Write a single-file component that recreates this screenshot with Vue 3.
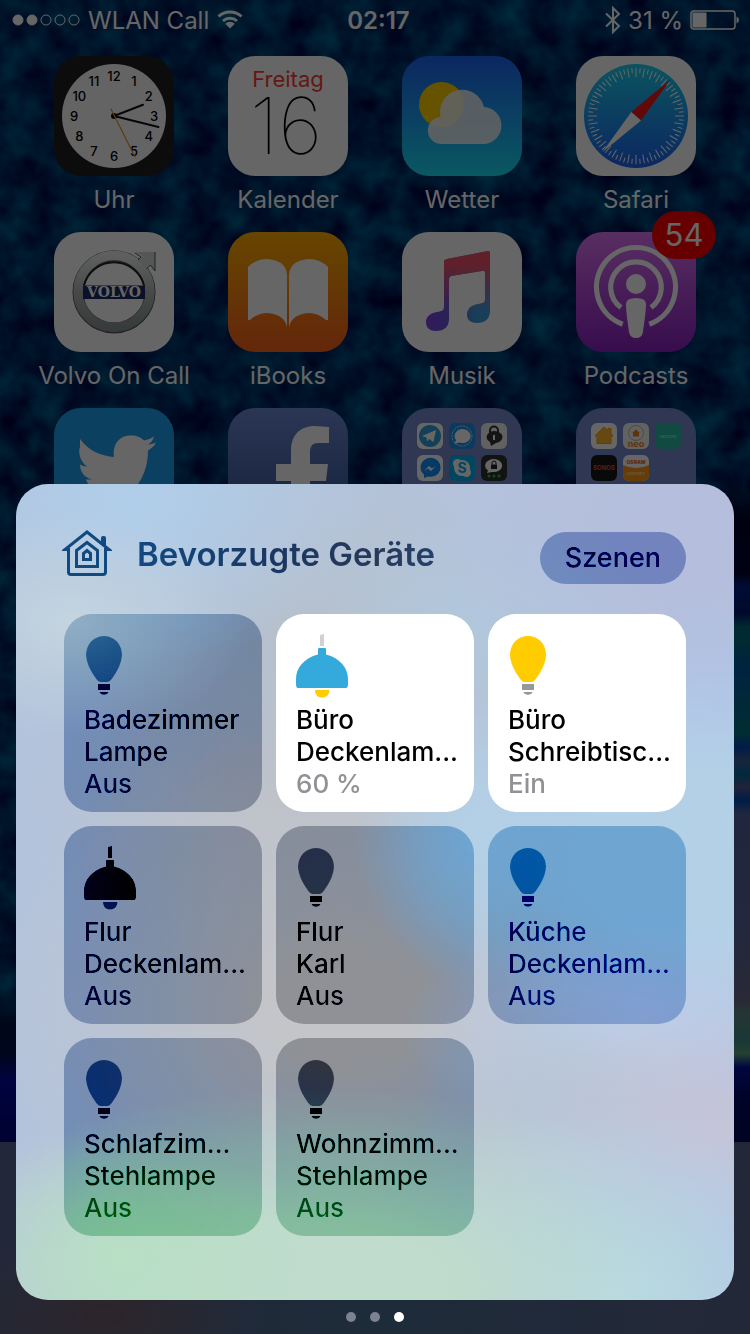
<template>
  <div class="screen">
    <svg class="wallpaper" aria-hidden="true">
      <filter id="water" x="0" y="0" width="100%" height="100%" color-interpolation-filters="sRGB">
        <feTurbulence type="fractalNoise" baseFrequency="0.032" numOctaves="3" seed="7" />
        <feColorMatrix values="0 0 0 0 0  0.55 0 0 0 -0.09  0.45 0 0 0 0.17  0 0 0 0 1" />
      </filter>
      <rect width="100%" height="100%" filter="url(#water)" />
    </svg>
    <div class="aurora"></div>

    <div class="home">
      <header class="status">
        <div class="status-side">
          <svg width="68" height="12" viewBox="0 0 68 12">
            <circle v-for="n in 5" :key="n" :cx="n * 14 - 8" cy="6" r="5" stroke="#fff" :fill="n < 3 ? '#fff' : 'none'" />
          </svg>
          <span>WLAN Call</span>
          <svg width="26" height="20" viewBox="0 0 26 20">
            <path d="M1.500 6.500a17 17 0 0 1 23 0M6 11a10.500 10.500 0 0 1 14 0" fill="none" stroke="#fff" stroke-width="3" />
            <path d="M13 18.500l-4.800-4.800a7 7 0 0 1 9.600 0z" fill="#fff" />
          </svg>
        </div>
        <time class="clock">02:17</time>
        <div class="status-side right">
          <svg width="16" height="28" viewBox="0 0 16 28">
            <path d="M1 7.500l13 12.500-6 6V2l6 6L1 20.500" fill="none" stroke="#fff" stroke-width="2" />
          </svg>
          <span>31 %</span>
          <svg width="49" height="20" viewBox="0 0 49 20">
            <rect x="1" y="1" width="44" height="18" rx="3" fill="none" stroke="#fff" stroke-width="1.500" />
            <rect x="2.500" y="2.500" width="14" height="15" rx="1" fill="#fff" />
            <path d="M46.500 6.500q2.500 1 2.500 3.500t-2.500 3.500z" fill="#fff" />
          </svg>
        </div>
      </header>

      <main class="apps">
        <div class="app">
          <svg class="icon" viewBox="0 0 120 120">
            <rect width="120" height="120" fill="#1e1e1e" />
            <circle cx="60" cy="60" r="52" fill="#fafafc" />
            <text v-for="n in 12" :key="n" class="hour" :x="60 + 40 * Math.sin(n * Math.PI / 6)" :y="65 - 40 * Math.cos(n * Math.PI / 6)">{{ n }}</text>
            <g stroke-linecap="round" stroke="#111" stroke-width="2">
              <path d="M60 60L89 48.700M60 60l44.500 11" />
              <circle cx="60" cy="60" r="2" />
              <path d="M57 53l24 48" stroke="#f09020" stroke-width="1.200" />
            </g>
          </svg>
          <span>Uhr</span>
        </div>

        <div class="app">
          <svg class="icon" viewBox="0 0 120 120">
            <rect width="120" height="120" fill="#fff" />
            <text class="weekday" x="60" y="31">Freitag</text>
            <text class="day" x="58" y="98">16</text>
          </svg>
          <span>Kalender</span>
        </div>

        <div class="app">
          <svg class="icon" viewBox="0 0 120 120">
            <defs>
              <linearGradient id="sky" x2="0" y2="1">
                <stop stop-color="#1d62f2" />
                <stop offset="1" stop-color="#1adcf4" />
              </linearGradient>
            </defs>
            <rect width="120" height="120" fill="url(#sky)" />
            <circle cx="39.500" cy="48.500" r="22.500" fill="#ffd000" />
            <path d="M40.500 88a13.600 13.600 0 0 1-2-27.200A22.200 22.200 0 0 1 82 51.100a18.500 18.500 0 0 1 .500 36.900z" fill="#f4f6f8" opacity=".88" />
          </svg>
          <span>Wetter</span>
        </div>

        <div class="app">
          <svg class="icon" viewBox="0 0 120 120">
            <defs>
              <linearGradient id="compass" x2="0" y2="1">
                <stop stop-color="#1bd0ee" />
                <stop offset="1" stop-color="#1e62f0" />
              </linearGradient>
            </defs>
            <rect width="120" height="120" fill="#fff" />
            <circle cx="60" cy="60" r="52" fill="url(#compass)" />
            <line v-for="n in 72" :key="n" x1="60" y1="12" x2="60" :y2="n % 2 ? 17 : 21" :transform="`rotate(${n * 5} 60 60)`" stroke="#fff" stroke-width="1" />
            <path d="M94.700 23.300L65 64.500 55.300 56z" fill="#f81414" />
            <path d="M26.300 96.300L55.300 56l9.700 8.500z" fill="#fff" />
          </svg>
          <span>Safari</span>
        </div>

        <div class="app">
          <svg class="icon" viewBox="0 0 120 120">
            <defs>
              <linearGradient id="steel" x2="0" y2="1">
                <stop stop-color="#eceef0" />
                <stop offset=".5" stop-color="#b4b8b8" />
                <stop offset="1" stop-color="#8c9494" />
              </linearGradient>
            </defs>
            <rect width="120" height="120" fill="#fff" />
            <circle cx="60" cy="60" r="36" fill="none" stroke="#555" stroke-width="11" />
            <circle cx="60" cy="59.500" r="36" fill="none" stroke="url(#steel)" stroke-width="9.500" />
            <path d="M81 20h20v19l-4.500-6-4 4-8.500-8.500 4-4.500z" fill="#d4d8d8" />
            <path d="M101 20v19l-4.500-6-4 4M81 21l6 4-3 3" fill="none" stroke="#555" />
            <path d="M30 53.500a31 31 0 0 1 60 0" fill="none" stroke="#222" stroke-width="2" />
            <path d="M29 53.500h62v13.500H29z" fill="#1c2c68" />
            <text class="volvo" x="60" y="65">VOLVO</text>
          </svg>
          <span>Volvo On Call</span>
        </div>

        <div class="app">
          <svg class="icon" viewBox="0 0 120 120">
            <defs>
              <linearGradient id="books" x2="0" y2="1">
                <stop stop-color="#ffb000" />
                <stop offset="1" stop-color="#f8601c" />
              </linearGradient>
            </defs>
            <rect width="120" height="120" fill="url(#books)" />
            <g fill="#fff">
              <path d="M20 35q8-8 19-8 19 1 20 16v52q-3-13-20-14-9 0-17 7h-2z" />
              <path d="M100 35q-8-8-19-8-19 1-20 16v52q3-13 20-14 9 0 17 7h2z" />
            </g>
          </svg>
          <span>iBooks</span>
        </div>

        <div class="app">
          <svg class="icon" viewBox="0 0 120 120">
            <defs>
              <linearGradient id="noteBase">
                <stop stop-color="#8040e8" />
                <stop offset=".35" stop-color="#6458d8" />
                <stop offset=".8" stop-color="#409cdc" />
              </linearGradient>
              <linearGradient id="noteTop" x2="0" y2="1">
                <stop offset=".15" stop-color="#f05068" />
                <stop offset=".75" stop-color="#f05068" stop-opacity="0" />
              </linearGradient>
              <path id="note" d="M42 30q0-2.500 3-3l41-8q2 0 2 2v58c0 8-5 12-13 12-6 0-10-3-10-8 0-7 5-10 11-11 5-1 7-1 7-5V41q0-3-3-2l-31 5q-2 1-2 3v40c0 8-5 12-13 12-6 0-10-3-10-9s5-9 11-10c5-1 7-1 7-6z" />
            </defs>
            <rect width="120" height="120" fill="#fff" />
            <use href="#note" fill="url(#noteBase)" />
            <use href="#note" fill="url(#noteTop)" />
          </svg>
          <span>Musik</span>
        </div>

        <div class="app">
          <div class="badged">
            <svg class="icon" viewBox="0 0 120 120">
              <defs>
                <linearGradient id="cast" x2="0" y2="1">
                  <stop stop-color="#dc74f4" />
                  <stop offset="1" stop-color="#8a20c0" />
                </linearGradient>
              </defs>
              <rect width="120" height="120" fill="url(#cast)" />
              <g fill="none" stroke="#fff" stroke-width="5.200">
                <path d="M46.700 92.200a39.500 39.500 0 1 1 26.600 0" />
                <path d="M45 75.500a25.300 25.300 0 1 1 30 0" />
              </g>
              <circle cx="60" cy="52" r="10" fill="#fff" />
              <path d="M50 72q0-6 10-6t10 6c0 8-2 20-3 28q-1 6-7 6t-7-6c-1-8-3-20-3-28z" fill="#fff" />
            </svg>
            <span class="badge">54</span>
          </div>
          <span>Podcasts</span>
        </div>

        <div class="app">
          <svg class="icon" viewBox="0 0 120 120">
            <rect width="120" height="120" fill="#1da1f2" />
            <path d="M26 31c10 13 22 17 34 18C58 32 70 27 77 27.500c6 0 10 2 13 5 4-1 7-2 10-4-1 4-3 6-6 8 3 0 5-1 8-2-2 4-5 6-8 8 0 30-19 52-47 52-9 0-17-3-23-7 8 1 16-1 22-6-7 0-12-4-14-10h6c-8-2-12-8-12-15 2 1 4 2 7 2-7-5-9-14-7-20z" fill="#fff" />
          </svg>
        </div>

        <div class="app">
          <svg class="icon" viewBox="0 0 120 120">
            <defs>
              <linearGradient id="face" x2="0" y2="1">
                <stop stop-color="#6c88d4" />
                <stop offset="1" stop-color="#345090" />
              </linearGradient>
            </defs>
            <rect width="120" height="120" fill="url(#face)" />
            <path d="M101 19v16H91c-7 0-9 3-9 10v11h18l-2 17H82v47H63V73H48V56h15V43c0-16 9-25 24-25z" fill="#fff" />
          </svg>
        </div>

        <div class="app">
          <svg class="icon" viewBox="0 0 120 120">
            <rect width="120" height="120" fill="#768bcc" />
            <g transform="translate(15 15)">
              <rect width="26" height="26" rx="6" fill="#fff" />
              <circle cx="13" cy="13" r="11" fill="#30a0d8" />
              <path d="M5 13l14-6-2.500 12-4.500-3-2 2.500-.500-4z" fill="#fff" />
            </g>
            <g transform="translate(47 15)">
              <rect width="26" height="26" rx="6" fill="#2090ea" />
              <circle cx="13" cy="13" r="10" fill="none" stroke="#fff" stroke-dasharray="2 1" stroke-width=".8" />
              <path d="M5.500 21l1.500-4a8 7 0 1 1 3.500 2.500z" fill="#fff" />
            </g>
            <g transform="translate(79 15)">
              <rect width="26" height="26" rx="6" fill="#f2f2f2" />
              <path d="M9 11V7.500a4 4 0 0 1 8 0V11" fill="none" stroke="#333" stroke-width="2" />
              <path d="M9 19a8 6 0 1 1 6 1l-5 3z" fill="#333" />
              <path d="M13 12v5" stroke="#fff" stroke-width="2" />
            </g>
            <g transform="translate(15 47)">
              <rect width="26" height="26" rx="6" fill="#fff" />
              <path d="M7 23v-3.500a10 9.500 0 1 1 4 2z" fill="#1090fa" />
              <path d="M7 16l5-5 3 2.500 4-2.500-5 5-3-2.500z" fill="#fff" />
            </g>
            <g transform="translate(47 47)">
              <rect width="26" height="26" rx="6" fill="#00aff0" />
              <circle cx="13" cy="13" r="8" fill="#fff" />
              <circle cx="8.500" cy="8.500" r="4.500" fill="#fff" />
              <circle cx="17.500" cy="17.500" r="4.500" fill="#fff" />
              <text class="skype" x="13" y="18">S</text>
            </g>
            <g transform="translate(79 47)">
              <rect width="26" height="26" rx="6" fill="#303030" />
              <path d="M6 18l1-2.500a8.500 6.500 0 1 1 4 1.500z" fill="#fff" />
              <path d="M10 9.500h6V14h-6z" fill="#222" />
              <path d="M11 9.500V8a2 2 0 0 1 4 0v1.500" fill="none" stroke="#222" />
              <g fill="#20c040">
                <circle cx="8" cy="21" r="1.500" />
                <circle cx="13" cy="21" r="1.500" />
                <circle cx="18" cy="21" r="1.500" />
              </g>
            </g>
          </svg>
        </div>

        <div class="app">
          <svg class="icon" viewBox="0 0 120 120">
            <rect width="120" height="120" fill="#768bcc" />
            <g transform="translate(15 15)">
              <rect width="26" height="26" rx="6" fill="#fff" />
              <path d="M4 13l9-9 4 3.500V5.500h3v5l2 2.500h-2v7.500H6V13z" fill="#ffb42c" stroke="#f89a14" stroke-linejoin="round" />
            </g>
            <g transform="translate(47 15)">
              <rect width="26" height="26" rx="6" fill="#f6f4f2" />
              <circle cx="13" cy="10" r="7.500" fill="none" stroke="#bbb" />
              <path d="M9 10l4-3.500 4 3.500h-1v3.500h-6V10z" fill="#f08020" />
              <text class="neo" x="13" y="24">neo</text>
            </g>
            <g transform="translate(79 15)">
              <rect width="26" height="26" rx="6" fill="#28b8a4" />
              <text class="harmony" x="13" y="15">Harmony</text>
            </g>
            <g transform="translate(15 47)">
              <rect width="26" height="26" rx="6" fill="#181818" />
              <text class="sonos" x="13" y="15">SONOS</text>
            </g>
            <g transform="translate(47 47)">
              <rect width="26" height="26" rx="6" fill="#fff" />
              <path d="M0 10q13 6 26 0v10a6 6 0 0 1-6 6H6a6 6 0 0 1-6-6z" fill="#ff9a10" />
              <text class="osram" x="13" y="9">OSRAM</text>
              <text class="lightify" x="13" y="20">LIGHTIFY</text>
            </g>
          </svg>
        </div>
      </main>

      <div class="dock"></div>
    </div>

    <div class="dim"></div>

    <section class="control-center">
      <div class="panel">
        <div class="panel-head">
          <svg width="50" height="46" viewBox="0 0 50 46" fill="none" stroke="#104a80" stroke-width="3">
            <path d="M6.500 19.500H3L25 2l22 17.500h-3.500V42q0 2.500-2.500 2.500H9q-2.500 0-2.500-2.500z" />
            <path d="M14.500 20.500l10.500-8 10.500 8v16h-21z" />
            <path d="M21.500 23.500l3.500-3 3.500 3v6h-7z" />
            <path d="M39 8q0-2 2-2h1q2 0 2 2v9l-5-4z" fill="#104a80" stroke="none" />
          </svg>
          <h1>Bevorzugte Geräte</h1>
          <button class="scenes">Szenen</button>
        </div>

        <div class="tiles">
          <button v-for="device in devices" :key="device.room + device.name" class="tile" :class="{ on: device.on }">
            <svg v-if="device.type === 'bulb'" width="52" height="64" viewBox="0 0 52 64">
              <path class="glass" d="M20 2C10 2 2 10 2 20.500 2 31 10 42 13 46q1.500 2 3.500 2h7q2 0 3.500-2c3-4 11-15 11-25.500C38 10 30 2 20 2z" />
              <path class="socket" d="M14 50h12v6H14zM15.500 58h9q-1 2.700-4.500 2.700T15.500 58z" />
            </svg>
            <svg v-else width="52" height="64" viewBox="0 0 52 64">
              <path class="cord" d="M24 1l4-1v12h-4z" />
              <path class="shade" d="M22 15q0-1 1-1h6q1 0 1 1v5.500c14 3.500 22 13.500 22 24.500v5q0 4-2 4H2q-2 0-2-4v-5c0-11 8-21 22-24.500z" />
              <path class="light" d="M19 56h14.500c0 5-3.500 7.500-7.500 7.500S19 61 19 56z" />
            </svg>
            <span>{{ device.room }}</span>
            <span>{{ device.name }}</span>
            <span class="state">{{ device.state }}</span>
          </button>
        </div>
      </div>

      <nav class="pages">
        <button v-for="n in 3" :key="n" :class="{ active: n === page }" :aria-label="`Seite ${n}`" @click="page = n"></button>
      </nav>
    </section>
  </div>
</template>

<script setup>
import { ref } from 'vue';

const page = ref(3);

const devices = [
  { room: 'Badezimmer', name: 'Lampe', state: 'Aus', type: 'bulb' },
  { room: 'Büro', name: 'Deckenlam...', state: '60 %', type: 'pendant', on: true },
  { room: 'Büro', name: 'Schreibtisc...', state: 'Ein', type: 'bulb', on: true },
  { room: 'Flur', name: 'Deckenlam...', state: 'Aus', type: 'pendant' },
  { room: 'Flur', name: 'Karl', state: 'Aus', type: 'bulb' },
  { room: 'Küche', name: 'Deckenlam...', state: 'Aus', type: 'bulb' },
  { room: 'Schlafzim...', name: 'Stehlampe', state: 'Aus', type: 'bulb' },
  { room: 'Wohnzimm...', name: 'Stehlampe', state: 'Aus', type: 'bulb' }
];
</script>

<style>
body {
  margin: 0;
  background: #000c26;
}
</style>

<style scoped>
.screen {
  position: relative;
  display: grid;
  min-height: 100vh;
  overflow: hidden;
  font-family: Inter, "Liberation Sans", sans-serif;
}

button {
  border: none;
  padding: 0;
  font: inherit;
  text-align: left;
  cursor: pointer;
}

.wallpaper,
.aurora,
.dim {
  position: absolute;
  inset: 0;
  width: 100%;
  height: 100%;
}

.aurora {
  background:
    linear-gradient(transparent 74%, #001040 77%, #001048 79%, #0008a0 81%, #000478 86%) left / 50% 100% no-repeat,
    linear-gradient(transparent 36%, #000428 39%, #000430 43%, #001e88 44%, #001870 46%, #006878 47%, #006878 48%, #0058a0 50%, #007080 55%, #0048b0 56%, #405a98 57%, #006898 58%, #505890 59%, #0048b0 60%, #506098 61%, #586498 70%, #686888 75%, #5c8880 76%, #408c88 78%, #5ca080 79%, #0010a0 80%, #000858 83%) right / 50% 100% no-repeat;
}

.dim {
  z-index: 1;
  background: rgba(0, 0, 0, 0.6);
}

.home,
.control-center {
  position: relative;
  grid-area: 1 / 1;
}

.control-center {
  z-index: 2;
  align-self: end;
  padding: 0 16px;
}

.home {
  display: flex;
  flex-direction: column;
  color: #fff;
  font-size: 24px;
}

.status {
  display: grid;
  grid-template-columns: 1fr auto 1fr;
  align-items: center;
  height: 40px;
  margin-bottom: 16px;
  padding: 0 11px 0 12px;
}

.status-side {
  display: flex;
  align-items: center;
  gap: 8px;
}

.right {
  gap: 7px;
  justify-content: flex-end;
}

.clock {
  padding-left: 6px;
  font-weight: 600;
}

.apps {
  display: grid;
  grid-template-columns: repeat(4, 1fr);
  gap: 18px 0;
  padding: 0 27px;
}

.app {
  display: flex;
  flex-direction: column;
  align-items: center;
  gap: 10px;
  line-height: 28px;
}

.icon {
  display: block;
  width: 120px;
  height: 120px;
  border-radius: 27px;
}

.icon text {
  text-anchor: middle;
}

.hour {
  font-size: 13px;
  font-weight: 500;
}

.weekday {
  fill: #ff3b30;
  font-size: 22px;
}

.day {
  font-size: 78px;
  font-weight: 100;
}

.volvo {
  fill: #fff;
  font: bold 14px "DejaVu Serif", serif;
}

.skype {
  fill: #00aff0;
  font-size: 14px;
  font-weight: 700;
}

.neo {
  fill: #f08020;
  font-size: 9px;
  font-weight: 700;
}

.harmony {
  fill: #9ff;
  font-size: 4px;
}

.sonos {
  fill: #f05040;
  font-size: 6px;
  font-weight: 600;
}

.osram {
  fill: #f06020;
  font-size: 5px;
  font-weight: 800;
}

.lightify {
  fill: #fff;
  font-size: 4px;
}

.badged {
  position: relative;
}

.badge {
  position: absolute;
  top: -21px;
  right: -20px;
  width: 64px;
  border-radius: 24px;
  background: #ff0000;
  font-size: 31px;
  line-height: 48px;
  text-align: center;
}

.dock {
  height: 192px;
  margin-top: auto;
  background:
    radial-gradient(ellipse 20% 40% at 14% 90%, #705c68, transparent),
    linear-gradient(90deg, #56648f, #4c6c90 50%, #58648c);
}

.panel {
  isolation: isolate;
  border-radius: 32px;
  background:
    radial-gradient(ellipse 24% 16% at 15% 95%, #b8dfc4, transparent),
    radial-gradient(ellipse 60% 24% at 42% 98%, #bfdccc 30%, transparent),
    radial-gradient(ellipse 34% 24% at 84% 100%, #b5d8ec, transparent),
    radial-gradient(ellipse 26% 16% at 98% 79%, #c6c4d8, transparent),
    radial-gradient(ellipse 22% 14% at 76% 76%, #b8c6d6, transparent),
    radial-gradient(ellipse 30% 14% at 84% 67%, #beceea, transparent),
    radial-gradient(ellipse 46% 26% at 96% 46%, #b3d0e7 40%, transparent),
    radial-gradient(ellipse 18% 18% at 65% 43%, #b2d0e8, transparent),
    radial-gradient(ellipse 24% 14% at 98% 28%, #b0c0e8, transparent),
    radial-gradient(ellipse 24% 14% at 8% 17%, #c4d4df, transparent),
    radial-gradient(ellipse 34% 20% at 17% 2%, #b0ceea, transparent),
    radial-gradient(ellipse 40% 24% at 96% 6%, #b5bedd 20%, transparent),
    radial-gradient(ellipse 28% 14% at 66% 17%, #b0c8dc, transparent),
    radial-gradient(ellipse 34% 24% at 42% 18%, #b7bfca, transparent),
    radial-gradient(ellipse 50% 36% at 46% 64%, #c4c5c8 20%, transparent),
    radial-gradient(ellipse 38% 24% at 38% 38%, #bec1c8, transparent),
    #b3c3dc;
}

.panel-head {
  display: flex;
  padding: 46px 48px 30px 46px;
}

h1 {
  flex: 1;
  margin: 0 0 0 25px;
  background: linear-gradient(90deg, #124a82, #1a3762 45%, #28395a 80%, #24406c) left / 300px 100% no-repeat #24406c;
  background-clip: text;
  -webkit-background-clip: text;
  color: transparent;
  font-size: 33px;
  font-weight: 600;
  line-height: 48px;
}

/* grey burnt into the panel keeps the tint of whatever lies beneath */
.scenes,
.tile {
  background: #868686;
  color: #2e2e2e;
  mix-blend-mode: color-burn;
}

.scenes {
  margin-top: 2px;
  padding: 0 25px;
  border-radius: 26px;
  font-size: 27px;
  font-weight: 500;
  line-height: 52px;
}

.tiles {
  display: grid;
  grid-template-columns: repeat(3, 1fr);
  gap: 14px;
  padding: 0 48px 64px;
}

.tile {
  display: flex;
  flex-direction: column;
  min-width: 0;
  height: 198px;
  padding: 20px 0 0 20px;
  border-radius: 28px;
  font-size: 26px;
  font-weight: 500;
  line-height: 32px;
  white-space: nowrap;
}

.tile svg {
  flex: none;
  margin-bottom: 6px;
}

.glass {
  fill: #494949;
}

.socket,
.cord,
.shade {
  fill: #2e2e2e;
}

.light {
  fill: #404040;
}

.state {
  color: #363636;
}

.on {
  background: #fff;
  color: #000;
  mix-blend-mode: normal;
}

.on .glass,
.on .light {
  fill: #ffcc00;
}

.on .socket {
  fill: #98989a;
}

.on .cord {
  fill: #d0d0d6;
}

.on .shade {
  fill: #34aadc;
}

.on .state {
  color: #929296;
}

.pages {
  display: flex;
  align-items: center;
  justify-content: center;
  gap: 14px;
  height: 34px;
}

.pages button {
  width: 10px;
  height: 10px;
  border-radius: 50%;
  background: #7c828e;
}

.pages .active {
  background: #fff;
}
</style>
